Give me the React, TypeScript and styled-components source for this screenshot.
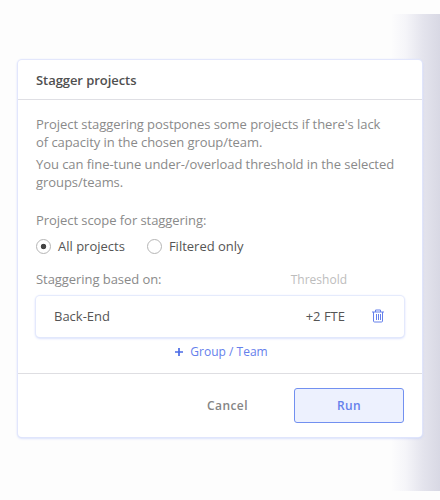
import React from "react";
import styled, { createGlobalStyle } from "styled-components";

const GlobalStyle = createGlobalStyle`
  * { box-sizing: border-box; }
  body { margin: 0; background: #fdfdfd; }
`;

const Page = styled.main`
  position: relative;
  width: 440px;
  height: 500px;
  padding: 60px 18px 0;
  overflow: hidden;
  background: #fdfdfd;
  color: #8a8a8a;
  font: 400 13px/18px "Open Sans", sans-serif;
`;

const EdgeShade = styled.div`
  position: absolute;
  top: 14px;
  right: 0;
  width: 49px;
  height: 477px;
  background: linear-gradient(to right, #fdfdfd, #f5f5f9 30%, #e4e4ed 65%, #d8d8e4);
`;

const Dialog = styled.section`
  position: relative;
  display: flex;
  flex-direction: column;
  width: 404px;
  height: 377px;
  border-radius: 4px;
  background: #fff;
  box-shadow: 0 0 1px 1px #e1e6fc, 0 1px 3px 0 #b9c7f9;
`;

const Header = styled.header`
  height: 40px;
  padding: 11px 18px 0;
  border-bottom: 1px solid #dfdfe4;
`;

const Title = styled.h1`
  margin: 0;
  color: #505050;
  font-size: 13px;
  line-height: 18px;
  font-weight: 600;
  letter-spacing: -0.06px;
`;

const Body = styled.div`
  height: 274px;
  padding: 15px 18px 0;
  border-bottom: 1px solid #dedee2;
  letter-spacing: -0.06px;
`;

const Paragraph = styled.p`
  margin: 0 0 4px;
  white-space: nowrap;
`;

const Label = styled.div`
  margin-top: 20px;
`;

const Choices = styled.div`
  display: flex;
  gap: 22px;
  margin-top: 8px;
`;

const Choice = styled.div`
  display: flex;
  align-items: center;
  gap: 7px;
  height: 18px;
  color: #555;
  letter-spacing: 0;
`;

const Radio = styled.span<{ $checked?: boolean }>`
  width: 15px;
  height: 15px;
  border: 1px solid #b5b5b5;
  border-radius: 50%;
  background: ${({ $checked }) =>
    $checked ? "radial-gradient(circle, #444 2.4px, #fff 3.1px)" : "#fff"};
`;

const ListHeading = styled.div`
  display: flex;
  justify-content: space-between;
  align-items: flex-end;
  margin-top: 15px;
  padding-right: 57px;
`;

const Threshold = styled.span`
  padding-top: 1px;
  margin-bottom: -1px;
  color: #bdbdbd;
  font-size: 12px;
  letter-spacing: 0;
`;

const GroupRow = styled.div`
  display: flex;
  align-items: center;
  height: 41px;
  margin-top: 8px;
  padding: 0 20px 2px 18px;
  border-radius: 4px;
  background: #fff;
  color: #555;
  letter-spacing: 0;
  box-shadow: 0 0 1px 1px #e4e9fc, 0 1px 3px 0 #b9c7f9;
`;

const Amount = styled.span`
  margin-left: auto;
  margin-right: 27px;
`;

const TrashIcon = styled.svg`
  display: block;
  width: 12px;
  height: 14px;
  fill: none;
  stroke: #6580eb;
`;

const AddButton = styled.button`
  display: flex;
  align-items: center;
  gap: 7px;
  margin: 6px auto 0;
  padding: 0 0 0 3px;
  border: 0;
  background: none;
  color: #6580ec;
  font: 400 12px/18px "Open Sans", sans-serif;
`;

const PlusIcon = styled.svg`
  display: block;
  width: 8px;
  height: 8px;
  fill: none;
  stroke: #4b6be6;
  stroke-width: 1.7;
`;

const Footer = styled.footer`
  display: flex;
  justify-content: flex-end;
  gap: 11px;
  padding: 14px 18px;
`;

const Button = styled.button<{ $primary?: boolean }>`
  width: ${({ $primary }) => ($primary ? "110px" : "111px")};
  height: 35px;
  padding: 0;
  border: 1px solid ${({ $primary }) => ($primary ? "#7290f0" : "transparent")};
  border-radius: 3px;
  background: ${({ $primary }) => ($primary ? "#edf1fe" : "transparent")};
  color: ${({ $primary }) => ($primary ? "#6580ec" : "#858585")};
  font: 600 12px/18px "Open Sans", sans-serif;
  letter-spacing: 0.4px;
`;

export default function App() {
  return (
    <>
      <GlobalStyle />
      <Page>
        <EdgeShade />
        <Dialog>
          <Header>
            <Title>Stagger projects</Title>
          </Header>
          <Body>
            <Paragraph>
              Project staggering postpones some projects if there's lack
              <br />
              of capacity in the chosen group/team.
            </Paragraph>
            <Paragraph>
              You can fine-tune under-/overload threshold in the selected
              <br />
              groups/teams.
            </Paragraph>
            <Label>Project scope for staggering:</Label>
            <Choices>
              <Choice>
                <Radio $checked />
                All projects
              </Choice>
              <Choice>
                <Radio />
                Filtered only
              </Choice>
            </Choices>
            <ListHeading>
              <span>Staggering based on:</span>
              <Threshold>Threshold</Threshold>
            </ListHeading>
            <GroupRow>
              <span>Back-End</span>
              <Amount>+2 FTE</Amount>
              <TrashIcon viewBox="0 0 12 14" aria-label="Remove">
                <path d="M0 3h12M3.5 3V1h5v2M1.5 3v9q0 1 1 1h7q1 0 1-1V3M4.5 5v6M6.5 5v6M8.5 5v6" />
              </TrashIcon>
            </GroupRow>
            <AddButton>
              <PlusIcon viewBox="0 0 8 8">
                <path d="M4 0v8M0 4h8" />
              </PlusIcon>
              Group / Team
            </AddButton>
          </Body>
          <Footer>
            <Button>Cancel</Button>
            <Button $primary>Run</Button>
          </Footer>
        </Dialog>
      </Page>
    </>
  );
}
